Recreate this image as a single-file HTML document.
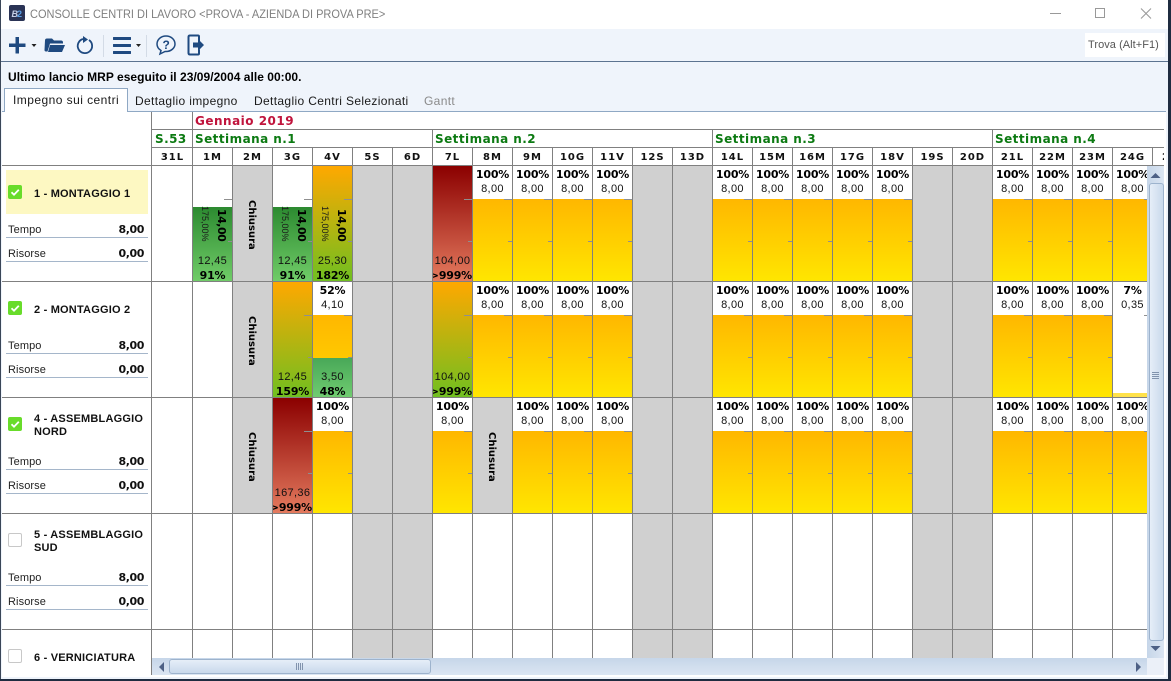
<!DOCTYPE html>
<html><head><meta charset="utf-8"><style>
html,body{margin:0;padding:0;background:#1f2c40}
body{width:1171px;height:681px;overflow:hidden;position:relative;font-family:"Liberation Sans",sans-serif}
div,span{position:absolute;box-sizing:border-box;white-space:nowrap}
#win{left:1px;top:0;width:1167px;height:680px;background:#eff4fb}
#bar{left:0;top:0;width:1167px;height:29px;background:#fff}
#title{left:30px;top:6px;font-size:12px;color:#7f7f7f;line-height:16px;transform:scaleX(.917);transform-origin:0 0}
#tb{left:0;top:29px;width:1167px;height:33px;background:#eff4fb;border-bottom:1px solid #5c7390}
.tab{top:94px;font-size:12px;line-height:14px;letter-spacing:.35px;color:#1a1a1a}
#main{left:2px;top:111px;width:1164px;height:565px;background:#fff;border-top:1px solid #8fa8c4}
.h{background:#808080}
.grid{left:192px;top:147px;width:956px;height:512px;background:repeating-linear-gradient(90deg,#808080 0 1px,transparent 1px 40px)}
.gray{top:166px;height:493px;width:80px;background:#d0d0d0}
.r{left:0;width:1147px;height:115px;overflow:hidden}
.c{top:0;width:39px;height:115px;overflow:hidden;text-align:center;background:#fff}
.c b{position:absolute;left:0;top:2px;width:100%;font:bold 11px/14px "DejaVu Sans",sans-serif;color:#000;letter-spacing:-.2px}
.c i{position:absolute;left:0;top:16px;width:100%;font:normal 11px/14px "Liberation Sans",sans-serif;color:#111;letter-spacing:.35px}
.c.e b{top:103px}.c.e i{top:88px}
.c.o b{left:-8px;width:47px;text-align:right}
.y{background:#fff linear-gradient(#ffb700,#ffe600) no-repeat 0 33px/100% 82px}
.t:before{content:"";position:absolute;right:0;top:33px;width:8px;height:1px;background:#8f8f8f;z-index:2}
.t:after{content:"";position:absolute;right:0;top:75px;width:4px;height:1px;background:#8f8f8f;z-index:2}
.red{background:linear-gradient(#8b0000,#e47a5e)}
.og{background:linear-gradient(#ffa800,#70bf20)}
.gr{background:#fff linear-gradient(#2c8a30,#70cc68) no-repeat 0 41px/100% 74px}
.ch{background:#d0d0d0}
.ch span{left:11px;top:34px;writing-mode:vertical-rl;font:bold 10px/14px "DejaVu Sans",sans-serif;color:#000}
.ro{writing-mode:vertical-rl;left:21px;top:43px;font:bold 11px/14px "DejaVu Sans",sans-serif;color:#000;letter-spacing:-.5px}
.rs{writing-mode:vertical-rl;left:6px;top:40px;font:9px/12px "Liberation Sans",sans-serif;color:#1a1a1a}
.d{top:149px;width:39px;height:17px;text-align:center;font:bold 10px/17px "DejaVu Sans",sans-serif;letter-spacing:1px;color:#111}
.w{top:131px;font:bold 12px/17px "DejaVu Sans",sans-serif;color:#0c7a12;letter-spacing:.45px}
.n{left:34px;font:bold 11px/13px "Liberation Sans",sans-serif;color:#111;letter-spacing:.2px}
.l{left:8px;font:11px/14px "Liberation Sans",sans-serif;color:#222;letter-spacing:.1px}
.v{right:1027px;font:bold 11px/14px "DejaVu Sans",sans-serif;color:#111;letter-spacing:-.4px}
.u{left:6px;width:142px;height:1px;background:#a5b6ca}
.cb{left:8px;width:14px;height:14px;border-radius:2px;background:#68dc2a}
.cb0{background:#fff;border:1px solid #c8c8c8}
.cb svg{position:absolute;left:0;top:0}
</style></head><body>
<div id="win">
<div id="bar"></div>
<div id="tb"></div>
</div>
<svg style="position:absolute;left:0;top:0" width="1171" height="64">
<rect x="9" y="5" width="16" height="16" rx="2" fill="#2a3355"/>
<text x="11.500" y="17" font-family="Liberation Sans" font-size="9" font-style="italic" font-weight="bold" fill="#c6cfe8">B</text><text x="17" y="17" font-family="Liberation Sans" font-size="9" font-weight="bold" fill="#5aa0e8">2</text>
<path d="M1050 13.500h11" stroke="#999" stroke-width="1"/>
<rect x="1095.500" y="8.500" width="9" height="9" fill="none" stroke="#999"/>
<path d="M1141 8.500l10 10M1151 8.500l-10 10" stroke="#999" stroke-width="1" fill="none"/>
<g fill="#1f4a80" stroke="none">
<path d="M15.500 37h3.500v6.500h6.500v3.500h-6.500v6.500h-3.500v-6.500h-6.500v-3.500h6.500z"/>
<path d="M31.500 44h5l-2.500 3z" fill="#222"/>
<path transform="translate(0,-1)" d="M45 41.500q0-2 2-2h5l2 2h7q2 0 2 2v1h-13l-2.500 8h-1.500q-1.500 0-1.500-1.500zM50 46h15l-3 7h-14z"/>
<rect x="113" y="37" width="18" height="3" rx=".5"/><rect x="113" y="44" width="18" height="3" rx=".5"/><rect x="113" y="51" width="18" height="3" rx=".5"/>
<path d="M136 44h5l-2.500 3z" fill="#222"/>
</g>
<path d="M83 39a7.200 7.200 0 1 0 6 1" fill="none" stroke="#1f4a80" stroke-width="1.800"/>
<path d="M83 36l5 3.500-5 3.500z" fill="#1f4a80"/>
<path d="M103.500 35v22M146.500 35v22" stroke="#d3dbe6" stroke-width="1"/>
<path d="M166 36c-5 0-9 3.500-9 8 0 3 1.500 5 4 6.500l-1 3.500 5-2.500h1c5 0 9-3.500 9-7.500 0-4.500-4-8-9-8z" fill="none" stroke="#1f4a80" stroke-width="1.500"/>
<text x="162.500" y="49" font-family="Liberation Sans" font-size="12" font-weight="bold" fill="#1f4a80">?</text>
<path d="M199 41v-4.500q0-1-1-1h-8q-1.500 0-1.500 1.500v16q0 1.500 1.500 1.500h8q1 0 1-1v-4" fill="none" stroke="#1f4a80" stroke-width="2"/>
<path d="M193 42.500h5v-3.500l6 6-6 6v-3.500h-5z" fill="#1f4a80"/>
</svg>
<div id="title">CONSOLLE CENTRI DI LAVORO &lt;PROVA - AZIENDA DI PROVA PRE&gt;</div>
<div style="left:1085px;top:33px;width:80px;height:24px;background:#fff;font-size:11px;line-height:24px;color:#555;padding-left:3px;letter-spacing:.05px">Trova (Alt+F1)</div>
<div style="left:8px;top:70px;font:bold 12px/14px 'Liberation Sans',sans-serif;color:#000;letter-spacing:.03px">Ultimo lancio MRP eseguito il 23/09/2004 alle 00:00.</div>
<div id="main"></div>
<div style="left:4px;top:88px;width:124px;height:24px;background:#fff;border:1px solid #8fa8c4;border-bottom:none"></div>
<div class="tab" style="left:13px;top:93px;letter-spacing:.45px">Impegno sui centri</div>
<div class="tab" style="left:135px">Dettaglio impegno</div>
<div class="tab" style="left:254px">Dettaglio Centri Selezionati</div>
<div class="tab" style="left:424px;color:#8a8a8a">Gantt</div>

<div class="gray" style="left:353px;width:79px"></div>
<div class="gray" style="left:633px;width:79px"></div>
<div class="gray" style="left:913px;width:79px"></div>
<div class="grid"></div>
<div class="h" style="left:151px;top:112px;width:1px;height:564px"></div>
<div class="h" style="left:192px;top:112px;width:1px;height:36px"></div>
<div class="h" style="left:432px;top:129px;width:1px;height:18px"></div>
<div class="h" style="left:712px;top:129px;width:1px;height:18px"></div>
<div class="h" style="left:992px;top:129px;width:1px;height:18px"></div>
<div class="h" style="left:152px;top:129px;width:1013px;height:1px"></div>
<div class="h" style="left:152px;top:147px;width:1013px;height:1px"></div>
<div class="h" style="left:2px;top:165px;width:1163px;height:1px"></div>
<div class="h" style="left:1152px;top:147px;width:1px;height:18px"></div>
<div class="h" style="left:2px;top:281px;width:1145px;height:1px"></div>
<div class="h" style="left:2px;top:397px;width:1145px;height:1px"></div>
<div class="h" style="left:2px;top:513px;width:1145px;height:1px"></div>
<div class="h" style="left:2px;top:629px;width:1145px;height:1px"></div>

<div style="left:195px;top:113px;font:bold 12px/17px 'DejaVu Sans',sans-serif;color:#c0143c;letter-spacing:.5px">Gennaio 2019</div>
<div class="w" style="left:155px">S.53</div>
<div class="w" style="left:195px">Settimana n.1</div>
<div class="w" style="left:435px">Settimana n.2</div>
<div class="w" style="left:715px">Settimana n.3</div>
<div class="w" style="left:995px">Settimana n.4</div>
<div class="d" style="left:153px">31L</div><div class="d" style="left:193px">1M</div><div class="d" style="left:233px">2M</div><div class="d" style="left:273px">3G</div><div class="d" style="left:313px">4V</div><div class="d" style="left:353px">5S</div><div class="d" style="left:393px">6D</div><div class="d" style="left:433px">7L</div><div class="d" style="left:473px">8M</div><div class="d" style="left:513px">9M</div><div class="d" style="left:553px">10G</div><div class="d" style="left:593px">11V</div><div class="d" style="left:633px">12S</div><div class="d" style="left:673px">13D</div><div class="d" style="left:713px">14L</div><div class="d" style="left:753px">15M</div><div class="d" style="left:793px">16M</div><div class="d" style="left:833px">17G</div><div class="d" style="left:873px">18V</div><div class="d" style="left:913px">19S</div><div class="d" style="left:953px">20D</div><div class="d" style="left:993px">21L</div><div class="d" style="left:1033px">22M</div><div class="d" style="left:1073px">23M</div><div class="d" style="left:1113px">24G</div><div style="left:1153px;top:149px;width:12px;height:17px;overflow:hidden;font:bold 10px/17px 'DejaVu Sans',sans-serif;padding-left:9px;color:#111">25V</div>

<!-- ROW 1 -->
<div class="r" style="top:166px">
<div class="c gr t" style="left:193px"><span class="ro">14,00</span><span class="rs">175,00%</span><b style="top:103px">91%</b><i style="top:88px">12,45</i></div>
<div class="c ch" style="left:233px"><span>Chiusura</span></div>
<div class="c gr t" style="left:273px"><span class="ro">14,00</span><span class="rs">175,00%</span><b style="top:103px">91%</b><i style="top:88px">12,45</i></div>
<div class="c og t" style="left:313px"><span class="ro">14,00</span><span class="rs">175,00%</span><b style="top:103px">182%</b><i style="top:88px">25,30</i></div>
<div class="c red t e o" style="left:433px"><b>&gt;999%</b><i>104,00</i></div>
<div class="c y t" style="left:473px"><b>100%</b><i>8,00</i></div>
<div class="c y t" style="left:513px"><b>100%</b><i>8,00</i></div>
<div class="c y t" style="left:553px"><b>100%</b><i>8,00</i></div>
<div class="c y t" style="left:593px"><b>100%</b><i>8,00</i></div>
<div class="c y t" style="left:713px"><b>100%</b><i>8,00</i></div>
<div class="c y t" style="left:753px"><b>100%</b><i>8,00</i></div>
<div class="c y t" style="left:793px"><b>100%</b><i>8,00</i></div>
<div class="c y t" style="left:833px"><b>100%</b><i>8,00</i></div>
<div class="c y t" style="left:873px"><b>100%</b><i>8,00</i></div>
<div class="c y t" style="left:993px"><b>100%</b><i>8,00</i></div>
<div class="c y t" style="left:1033px"><b>100%</b><i>8,00</i></div>
<div class="c y t" style="left:1073px"><b>100%</b><i>8,00</i></div>
<div class="c y t" style="left:1113px"><b>100%</b><i>8,00</i></div>
</div>
<!-- ROW 2 -->
<div class="r" style="top:282px">
<div class="c ch" style="left:233px"><span>Chiusura</span></div>
<div class="c og t e" style="left:273px"><b>159%</b><i>12,45</i></div>
<div class="c t" style="left:313px;background:#fff linear-gradient(#ffb700,#ffc800) no-repeat 0 33px/100% 43px"><b>52%</b><i>4,10</i><span style="left:0;top:76px;width:39px;height:39px;background:linear-gradient(#48a858,#70cc70)"></span><b style="top:103px">48%</b><i style="top:88px">3,50</i></div>
<div class="c og t e o" style="left:433px"><b>&gt;999%</b><i>104,00</i></div>
<div class="c y t" style="left:473px"><b>100%</b><i>8,00</i></div>
<div class="c y t" style="left:513px"><b>100%</b><i>8,00</i></div>
<div class="c y t" style="left:553px"><b>100%</b><i>8,00</i></div>
<div class="c y t" style="left:593px"><b>100%</b><i>8,00</i></div>
<div class="c y t" style="left:713px"><b>100%</b><i>8,00</i></div>
<div class="c y t" style="left:753px"><b>100%</b><i>8,00</i></div>
<div class="c y t" style="left:793px"><b>100%</b><i>8,00</i></div>
<div class="c y t" style="left:833px"><b>100%</b><i>8,00</i></div>
<div class="c y t" style="left:873px"><b>100%</b><i>8,00</i></div>
<div class="c y t" style="left:993px"><b>100%</b><i>8,00</i></div>
<div class="c y t" style="left:1033px"><b>100%</b><i>8,00</i></div>
<div class="c y t" style="left:1073px"><b>100%</b><i>8,00</i></div>
<div class="c t" style="left:1113px;background:#fff linear-gradient(#ffe24a,#ffe24a) no-repeat 0 111px/100% 4px"><b>7%</b><i>0,35</i></div>
</div>
<!-- ROW 3 -->
<div class="r" style="top:398px">
<div class="c ch" style="left:233px"><span>Chiusura</span></div>
<div class="c red t e o" style="left:273px"><b>&gt;999%</b><i>167,36</i></div>
<div class="c y t" style="left:313px"><b>100%</b><i>8,00</i></div>
<div class="c y t" style="left:433px"><b>100%</b><i>8,00</i></div>
<div class="c ch" style="left:473px"><span>Chiusura</span></div>
<div class="c y t" style="left:513px"><b>100%</b><i>8,00</i></div>
<div class="c y t" style="left:553px"><b>100%</b><i>8,00</i></div>
<div class="c y t" style="left:593px"><b>100%</b><i>8,00</i></div>
<div class="c y t" style="left:713px"><b>100%</b><i>8,00</i></div>
<div class="c y t" style="left:753px"><b>100%</b><i>8,00</i></div>
<div class="c y t" style="left:793px"><b>100%</b><i>8,00</i></div>
<div class="c y t" style="left:833px"><b>100%</b><i>8,00</i></div>
<div class="c y t" style="left:873px"><b>100%</b><i>8,00</i></div>
<div class="c y t" style="left:993px"><b>100%</b><i>8,00</i></div>
<div class="c y t" style="left:1033px"><b>100%</b><i>8,00</i></div>
<div class="c y t" style="left:1073px"><b>100%</b><i>8,00</i></div>
<div class="c y t" style="left:1113px"><b>100%</b><i>8,00</i></div>
</div>

<!-- LEFT PANEL -->
<div style="left:6px;top:170px;width:142px;height:44px;background:#fdf8c2"></div>
<div class="cb" style="top:185px"><svg width="14" height="14"><path d="M3.500 7.200l2.500 2.500 4.800-5" fill="none" stroke="#fff" stroke-width="1.800"/></svg></div>
<div class="n" style="top:188px">1 - MONTAGGIO 1</div>
<div class="l" style="top:223px">Tempo</div><div class="v" style="top:223px">8,00</div><div class="u" style="top:237px"></div>
<div class="l" style="top:247px">Risorse</div><div class="v" style="top:247px">0,00</div><div class="u" style="top:261px"></div>

<div class="cb" style="top:301px"><svg width="14" height="14"><path d="M3.500 7.200l2.500 2.500 4.800-5" fill="none" stroke="#fff" stroke-width="1.800"/></svg></div>
<div class="n" style="top:304px">2 - MONTAGGIO 2</div>
<div class="l" style="top:339px">Tempo</div><div class="v" style="top:339px">8,00</div><div class="u" style="top:353px"></div>
<div class="l" style="top:363px">Risorse</div><div class="v" style="top:363px">0,00</div><div class="u" style="top:377px"></div>

<div class="cb" style="top:417px"><svg width="14" height="14"><path d="M3.500 7.200l2.500 2.500 4.800-5" fill="none" stroke="#fff" stroke-width="1.800"/></svg></div>
<div class="n" style="top:413px">4 - ASSEMBLAGGIO<br>NORD</div>
<div class="l" style="top:455px">Tempo</div><div class="v" style="top:455px">8,00</div><div class="u" style="top:469px"></div>
<div class="l" style="top:479px">Risorse</div><div class="v" style="top:479px">0,00</div><div class="u" style="top:493px"></div>

<div class="cb cb0" style="top:533px"></div>
<div class="n" style="top:529px">5 - ASSEMBLAGGIO<br>SUD</div>
<div class="l" style="top:571px">Tempo</div><div class="v" style="top:571px">8,00</div><div class="u" style="top:585px"></div>
<div class="l" style="top:595px">Risorse</div><div class="v" style="top:595px">0,00</div><div class="u" style="top:609px"></div>

<div class="cb cb0" style="top:649px"></div>
<div class="n" style="top:652px">6 - VERNICIATURA</div>

<!-- SCROLLBARS -->
<div style="left:1147px;top:166px;width:17px;height:492px;background:linear-gradient(90deg,#c6d6e9,#dbe5f2)"></div>
<div style="left:1149px;top:183px;width:15px;height:458px;background:linear-gradient(90deg,#e6eef8,#c9d9ec);border:1px solid #9db3cd;border-radius:3px"></div>
<svg style="position:absolute;left:1147px;top:166px" width="17" height="492">
<path d="M3.500 12h10l-5-5z" fill="#4d6085"/>
<path d="M5 206.500h7M5 208.500h7M5 210.500h7M5 212.500h7" stroke="#8193ad" stroke-width="1"/>
<path d="M3.500 480h10l-5 5z" fill="#4d6085"/>
</svg>
<div style="left:152px;top:658px;width:995px;height:17px;background:linear-gradient(#c6d6e9,#dbe5f2)"></div>
<div style="left:169px;top:659px;width:262px;height:15px;background:linear-gradient(#e6eef8,#c9d9ec);border:1px solid #9db3cd;border-radius:3px"></div>
<svg style="position:absolute;left:152px;top:658px" width="995" height="17">
<path d="M12 4v10l-5-5z" fill="#4d6085"/>
<path d="M144.500 5v7M146.500 5v7M148.500 5v7M150.500 5v7" stroke="#8193ad" stroke-width="1"/>
<path d="M984 4v10l5-5z" fill="#4d6085"/>
</svg>
<div style="left:1147px;top:658px;width:17px;height:17px;background:#ebf0f8"></div>
<div style="left:1164px;top:112px;width:2px;height:564px;background:#fff"></div>
<div style="left:2px;top:675px;width:1164px;height:2px;background:#fff"></div>
<div style="left:0;top:0;width:1px;height:681px;background:#3a4658"></div>
<div style="left:1168px;top:0;width:3px;height:681px;background:#1f2c40"></div>
<div style="left:0;top:679px;width:1171px;height:2px;background:#1f2c40"></div>
</body></html>
